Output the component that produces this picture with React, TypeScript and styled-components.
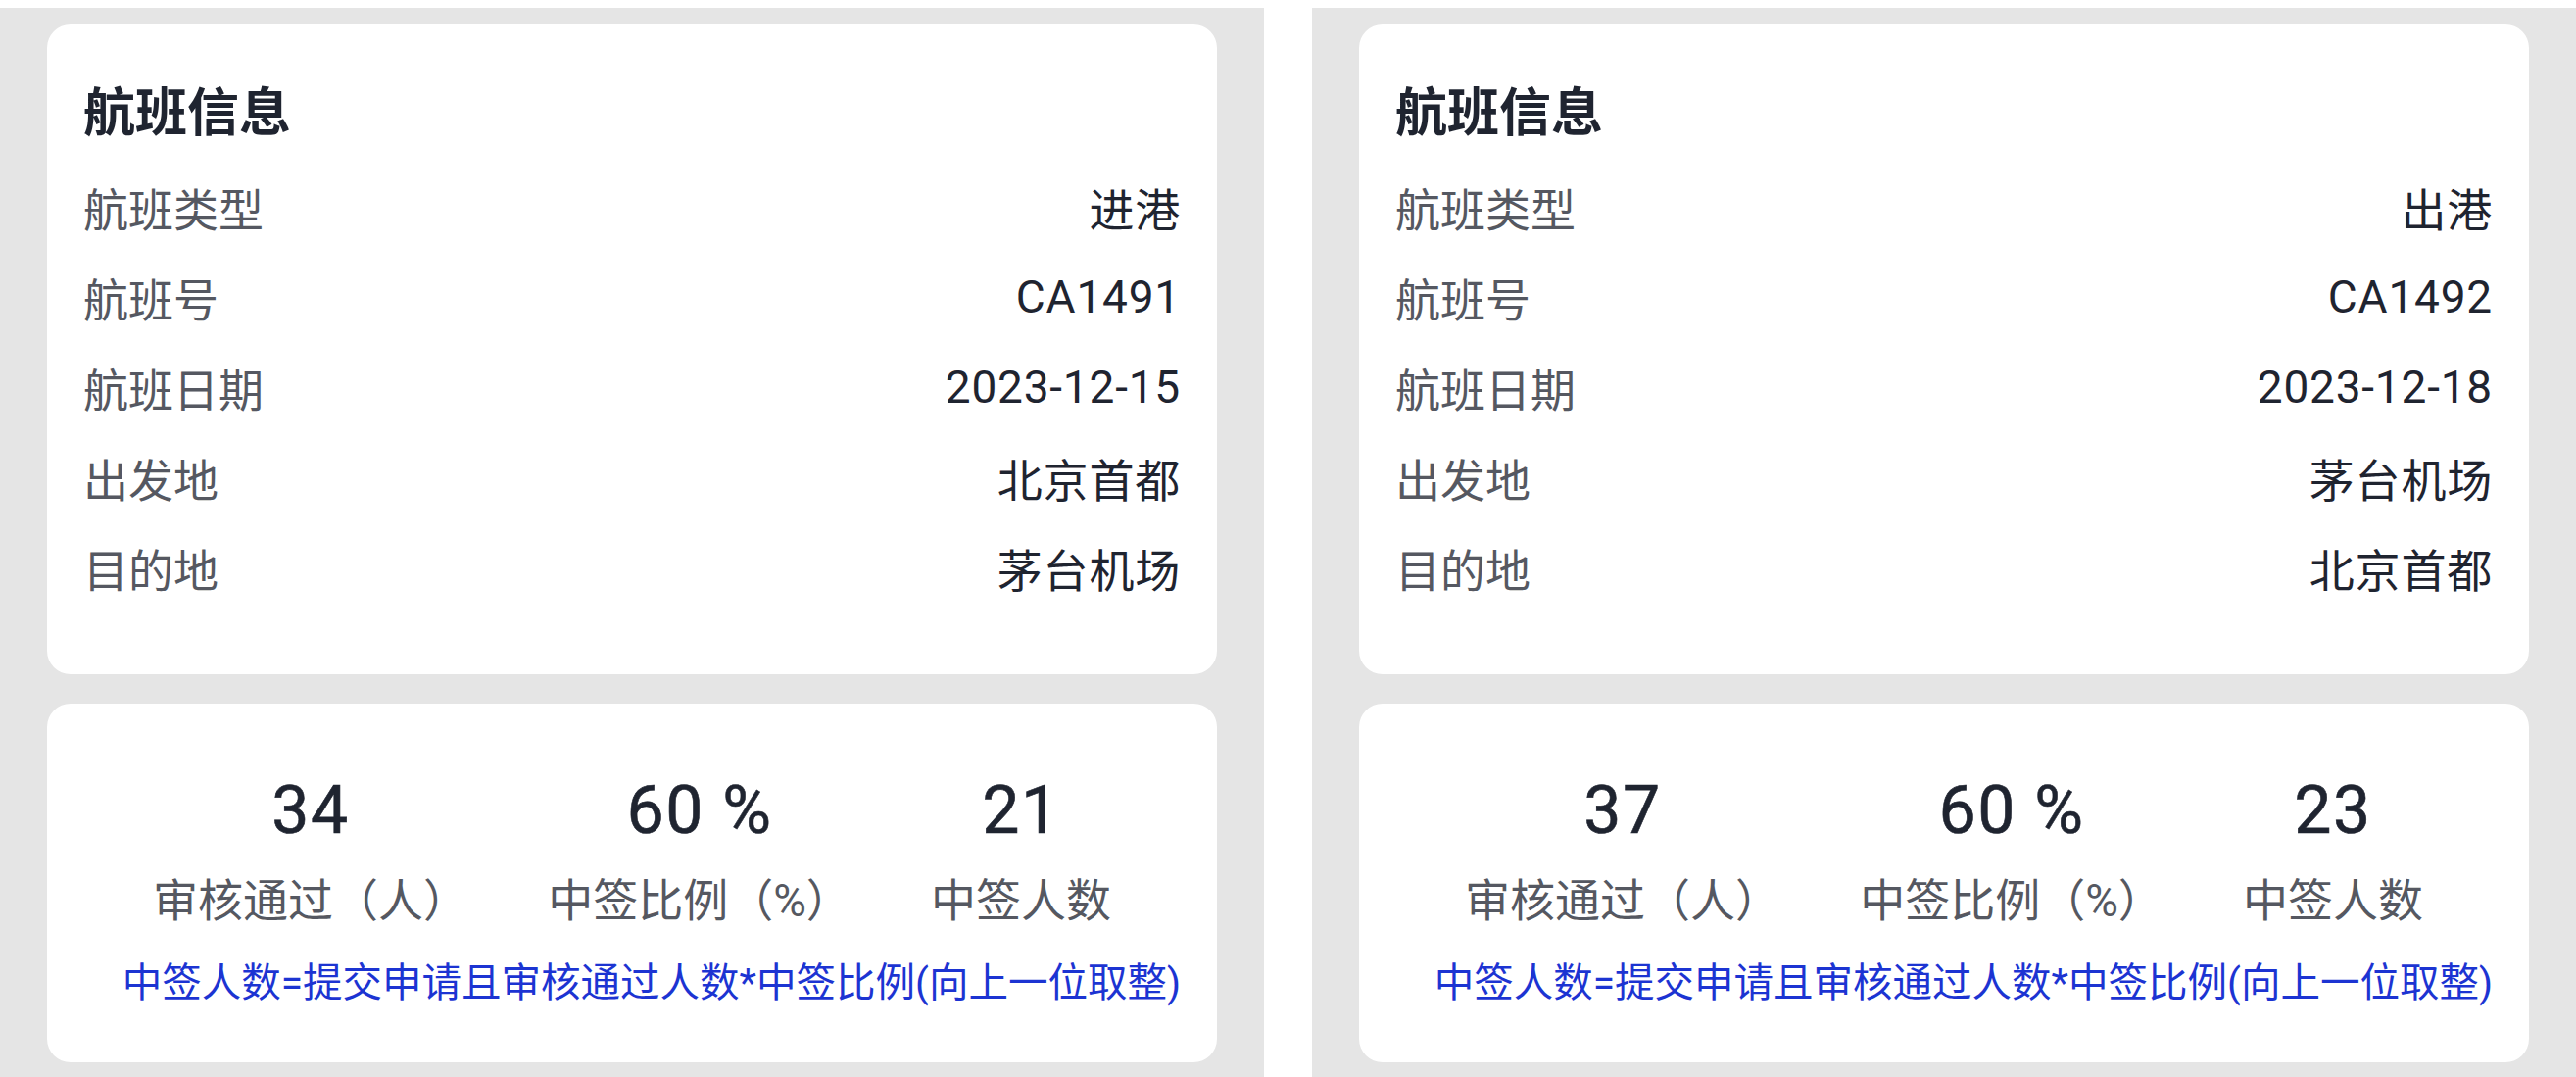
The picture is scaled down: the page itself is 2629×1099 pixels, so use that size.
import React from "react";
import styled, { createGlobalStyle } from "styled-components";

const GlobalStyle = createGlobalStyle`
  html, body {
    margin: 0;
    padding: 0;
    background: #ffffff;
  }
  body {
    padding-top: 8px;
    font-family: "Roboto", "Noto Sans CJK SC", sans-serif;
  }
`;

const Page = styled.div`
  display: flex;
  gap: 49px;
  min-height: calc(100vh - 8px);
`;

const Panel = styled.div`
  flex: 1;
  display: flex;
  flex-direction: column;
  gap: 30px;
  padding: 17px 48px;
  background: #e5e5e5;
`;

const Card = styled.div`
  background: #ffffff;
  border-radius: 24px;
`;

const InfoCard = styled(Card)`
  padding: 48px 37px 63px;
`;

const Title = styled.h2`
  margin: 0 0 16px;
  font-size: 53px;
  line-height: 76px;
  font-weight: 700;
  color: #1f2430;
  font-family: "Noto Sans CJK SC", sans-serif;
`;

const Row = styled.div`
  display: flex;
  align-items: center;
  justify-content: space-between;
  height: 92px;
  font-size: 46px;
`;

const Label = styled.span`
  color: #555861;
  font-family: "Noto Sans CJK SC", sans-serif;
`;

const Value = styled.span`
  color: #1f2430;
  letter-spacing: 0.8px;
`;

const StatsCard = styled(Card)`
  padding: 69px 37px 53px;
`;

const StatsRow = styled.div`
  display: flex;
  justify-content: space-between;
  padding: 0 71px;
`;

const Stat = styled.div`
  display: flex;
  flex-direction: column;
  align-items: center;
  gap: 20px;
`;

const StatNumber = styled.div`
  font-size: 68px;
  line-height: 80px;
  font-weight: 400;
  letter-spacing: 1.5px;
  color: #1f2430;
  -webkit-text-stroke: 0.6px #1f2430;
`;

const StatLabel = styled.div`
  font-size: 46px;
  line-height: 64px;
  color: #555861;
`;

const Formula = styled.div`
  margin-top: 24px;
  text-align: right;
  font-size: 40.5px;
  line-height: 56px;
  color: #1c34d2;
`;

type Flight = {
  type: string;
  no: string;
  date: string;
  from: string;
  to: string;
  passed: number;
  ratio: number;
  winners: number;
};

const flights: Flight[] = [
  { type: "进港", no: "CA1491", date: "2023-12-15", from: "北京首都", to: "茅台机场", passed: 34, ratio: 60, winners: 21 },
  { type: "出港", no: "CA1492", date: "2023-12-18", from: "茅台机场", to: "北京首都", passed: 37, ratio: 60, winners: 23 },
];

const FlightPanel: React.FC<{ flight: Flight }> = ({ flight }) => {
  const rows = [
    ["航班类型", flight.type],
    ["航班号", flight.no],
    ["航班日期", flight.date],
    ["出发地", flight.from],
    ["目的地", flight.to],
  ];

  return (
    <Panel>
      <InfoCard>
        <Title>航班信息</Title>
        {rows.map(([label, value]) => (
          <Row key={label}>
            <Label>{label}</Label>
            <Value>{value}</Value>
          </Row>
        ))}
      </InfoCard>
      <StatsCard>
        <StatsRow>
          <Stat>
            <StatNumber>{flight.passed}</StatNumber>
            <StatLabel>审核通过（人）</StatLabel>
          </Stat>
          <Stat>
            <StatNumber>{flight.ratio} %</StatNumber>
            <StatLabel>中签比例（%）</StatLabel>
          </Stat>
          <Stat>
            <StatNumber>{flight.winners}</StatNumber>
            <StatLabel>中签人数</StatLabel>
          </Stat>
        </StatsRow>
        <Formula>中签人数=提交申请且审核通过人数*中签比例(向上一位取整)</Formula>
      </StatsCard>
    </Panel>
  );
};

const App: React.FC = () => (
  <>
    <GlobalStyle />
    <Page>
      {flights.map((f) => (
        <FlightPanel key={f.no} flight={f} />
      ))}
    </Page>
  </>
);

export default App;
